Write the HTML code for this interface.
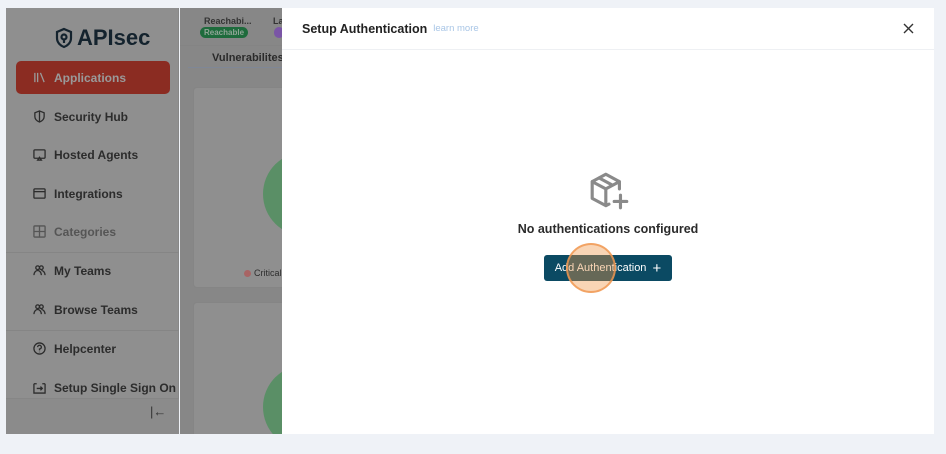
<!DOCTYPE html>
<html><head><meta charset="utf-8"><style>
*{margin:0;padding:0;box-sizing:border-box}
body{width:946px;height:454px;background:#eff2f7;font-family:"Liberation Sans",sans-serif;position:relative;overflow:hidden;white-space:nowrap}
.sb{position:absolute;left:6px;top:8px;width:173px;height:426px;background:#8f8f8f;border-right:1px solid #878787}
.logo{position:absolute;left:48px;top:17px;font-size:22px;font-weight:bold;color:#14232e;display:flex;align-items:center;gap:3px}
.item{position:absolute;left:10px;width:154px;height:33px;display:flex;align-items:center;font-size:12px;font-weight:bold;color:#2c2c2c;padding-left:17px}
.item svg{width:13px;height:13px;margin-right:8px;stroke:#2c2c2c;fill:none;stroke-width:1.4;flex:none}
.act{background:#8b2c22;border-radius:5px;color:#9a9a9a;}
.act svg{stroke:#9a9a9a}
.sep{position:absolute;left:0;width:173px;height:1px;background:#858585}
.main{position:absolute;left:180px;top:8px;width:102px;height:426px;background:#878787;overflow:hidden}
.card{position:absolute;left:13px;width:100px;background:#8f8f8f;border:1px solid #858585;border-radius:4px;overflow:hidden}
.circ{position:absolute;width:84px;height:84px;border-radius:50%;background:#5a8f66}
.modal{position:absolute;left:282px;top:8px;width:652px;height:426px;background:#fff}
.hdr{height:42px;border-bottom:1px solid #eef0f3;display:flex;align-items:center;padding-left:20px}
</style></head><body>
<div class="sb">
 <div class="logo"><svg width="20" height="22" viewBox="0 0 20 22" fill="none" stroke="#14232e" stroke-width="2.2"><path d="M10 2 L17 5 V11 C17 16 13 19 10 20 C7 19 3 16 3 11 V5 Z"/><circle cx="10" cy="10" r="2.5"/><path d="M10 12.5 V16"/></svg>APIsec</div>
 <div class="item act" style="top:53px"><svg viewBox="0 0 14 14"><path d="M2 2v10M5 2v10M8 2l4 10"/></svg>Applications</div>
 <div class="item" style="top:92px"><svg viewBox="0 0 14 14"><path d="M7 1L12 3V7C12 10 9.5 12 7 13C4.5 12 2 10 2 7V3Z M7 1V13"/></svg>Security Hub</div>
 <div class="item" style="top:130px"><svg viewBox="0 0 14 14"><rect x="1" y="2" width="12" height="9" rx="1"/><path d="M5 13l2-3 2 3z"/></svg>Hosted Agents</div>
 <div class="item" style="top:169px"><svg viewBox="0 0 14 14"><rect x="1" y="2" width="12" height="10" rx="1"/><path d="M1 5h12"/></svg>Integrations</div>
 <div class="item" style="top:207px;color:#555"><svg viewBox="0 0 14 14" style="stroke:#555"><rect x="1" y="1" width="12" height="12" rx="1"/><path d="M7 1v12M1 7h12"/></svg>Categories</div>
 <div class="sep" style="top:244px"></div>
 <div class="item" style="top:246px"><svg viewBox="0 0 14 14"><circle cx="5" cy="4" r="2"/><circle cx="9" cy="4" r="2"/><path d="M1 12c0-3 2-5 4-5s4 2 4 5M9 7c2 0 4 2 4 5"/></svg>My Teams</div>
 <div class="item" style="top:285px"><svg viewBox="0 0 14 14"><circle cx="5" cy="4" r="2"/><circle cx="9" cy="4" r="2"/><path d="M1 12c0-3 2-5 4-5s4 2 4 5M9 7c2 0 4 2 4 5"/></svg>Browse Teams</div>
 <div class="sep" style="top:322px"></div>
 <div class="item" style="top:324px"><svg viewBox="0 0 14 14"><circle cx="7" cy="7" r="6"/><path d="M5 5.5a2 2 0 1 1 2 2v1.5M7 10.5v.5"/></svg>Helpcenter</div>
 <div class="item" style="top:363px"><svg viewBox="0 0 14 14"><path d="M1 3v10h12V3M1 3h3M10 3h3M4 8h6M8 6l2 2-2 2"/></svg>Setup Single Sign On</div>
 <div style="position:absolute;top:390px;left:0;width:173px;height:36px;background:#8b8b8b;border-top:1px solid #868686"></div>
 <div style="position:absolute;left:144px;top:396px;font-size:13px;color:#333">|&larr;</div>
</div>
<div class="main">
 <div style="position:absolute;left:24px;top:8px;font-size:9px;font-weight:bold;color:#333">Reachabi...</div>
 <div style="position:absolute;left:20px;top:19px;background:#1e6b3c;color:#8fa596;font-size:8px;font-weight:bold;padding:1px 4px;border-radius:6px">Reachable</div>
 <div style="position:absolute;left:93px;top:8px;font-size:9px;font-weight:bold;color:#333">La</div>
 <div style="position:absolute;left:94px;top:19px;width:10px;height:11px;background:#7a55a6;border-radius:5px"></div>
 <div style="position:absolute;left:0;top:37px;width:102px;height:1px;background:#848484"></div>
 <div style="position:absolute;left:32px;top:44px;font-size:11px;font-weight:bold;color:#2a2a2a">Vulnerabilites (</div>
 <div style="position:absolute;left:8px;top:59px;width:94px;height:1px;background:#7f8796"></div>
 <div class="card" style="top:79px;height:201px"><div class="circ" style="left:69px;top:64px"></div>
  <div style="position:absolute;left:50px;top:180px;font-size:9px;color:#2d2d2d;display:flex;align-items:center;gap:3px"><span style="width:7px;height:7px;border-radius:50%;background:#a86464;display:inline-block"></span>Critical</div></div>
 <div class="card" style="top:294px;height:140px"><div class="circ" style="left:69px;top:62px"></div></div>
</div>
<div class="modal">
 <div class="hdr"><span style="font-size:12.5px;font-weight:bold;color:#222">Setup Authentication</span><span style="font-size:9.5px;color:#a9c6e6;margin-left:6px">learn more</span>
  <svg style="position:absolute;right:20px;top:15px" width="11" height="11" viewBox="0 0 11 11" stroke="#333" stroke-width="1.4"><path d="M1 1L10 10M10 1L1 10"/></svg></div>
 <svg style="position:absolute;left:307px;top:161px" width="42" height="44" viewBox="0 0 40 42" fill="none" stroke="#8a8a8a" stroke-width="3" stroke-linejoin="round" stroke-linecap="round"><path d="M29 19V12L16 5L3 12V28L16 35L19 33.5M3 12L16 19L29 12M16 19V35M9.5 8.5L22.5 15.5"/><path d="M30 25V37M24 31H36"/></svg>
 <div style="position:absolute;left:0;width:652px;top:214px;text-align:center;font-size:12.5px;font-weight:bold;color:#2b2b2b">No authentications configured</div>
 <div style="position:absolute;left:262px;top:247px;width:128px;height:26px;background:#0b4a63;border-radius:3px;color:#fff;font-size:11px;display:flex;align-items:center;justify-content:center">Add Authentication &nbsp;<span style="font-size:15px">+</span></div>
 <div style="position:absolute;left:284px;top:235px;width:50px;height:50px;border-radius:50%;background:rgba(240,150,70,0.4);border:2px solid rgba(240,150,80,0.8)"></div>
</div>
</body></html>
